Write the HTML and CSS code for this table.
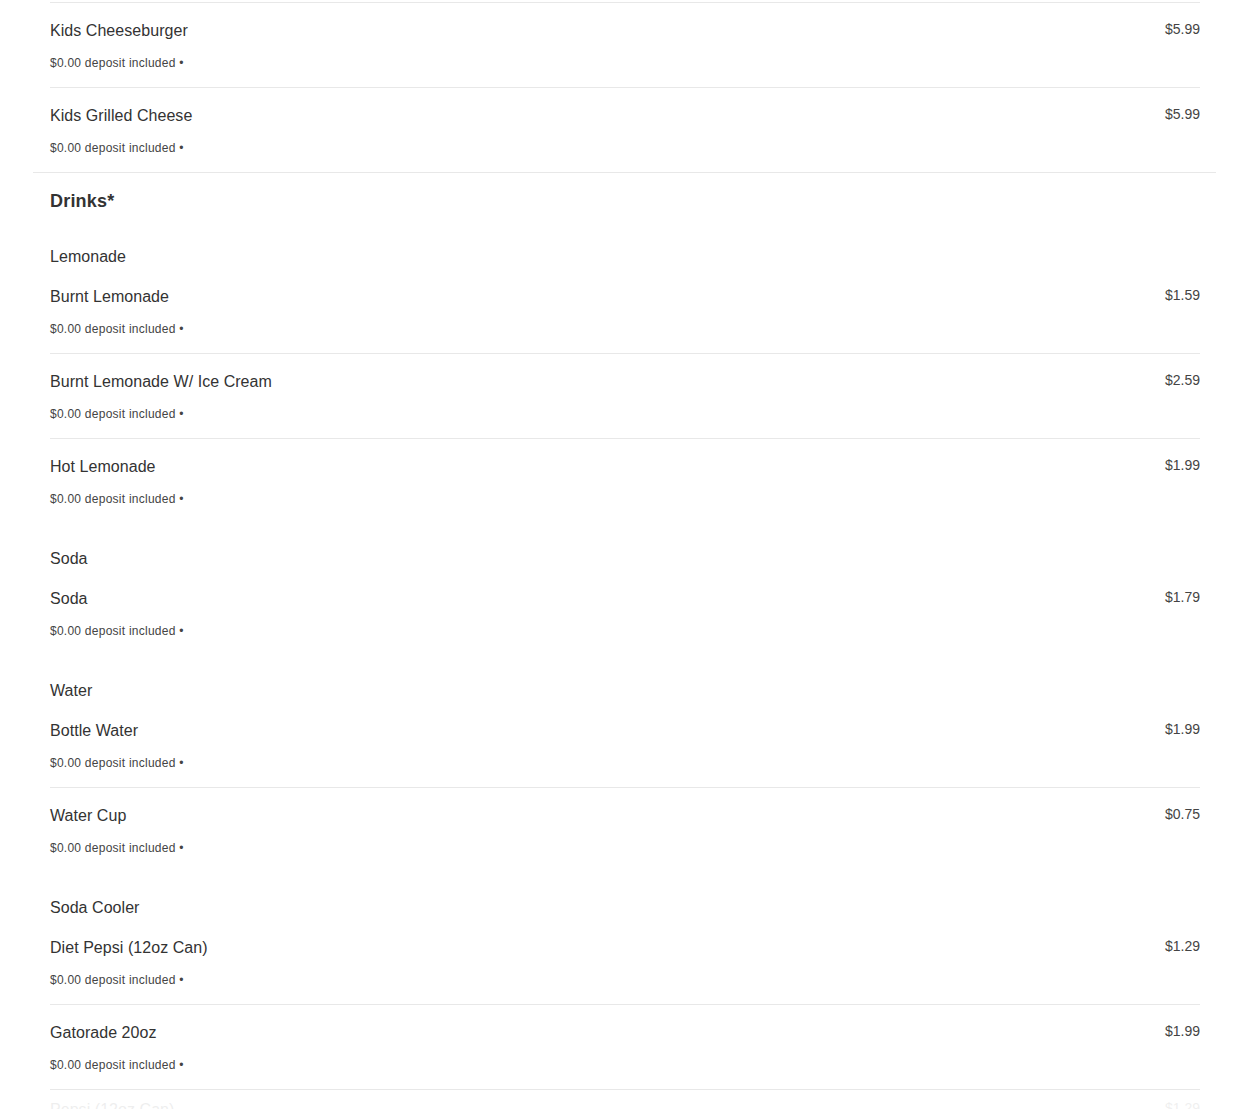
FILE: index.html
```html
<!DOCTYPE html>
<html lang="en">
<head>
    <meta charset="UTF-8">
    <meta name="viewport" content="width=device-width, initial-scale=1.0">
    <title>Menu</title>
    <link rel="stylesheet" href="styles.css">
</head>
<body>
    <div class="menu">
        <!-- Kids (tail end) -->
        <section class="category">
            <div class="group">
                <div class="item first">
                    <div class="item-info">
                        <div class="item-name">Kids Cheeseburger</div>
                        <div class="item-note">$0.00 deposit included •</div>
                    </div>
                    <div class="item-price">$5.99</div>
                </div>
                <div class="item">
                    <div class="item-info">
                        <div class="item-name">Kids Grilled Cheese</div>
                        <div class="item-note">$0.00 deposit included •</div>
                    </div>
                    <div class="item-price">$5.99</div>
                </div>
            </div>
        </section>

        <section class="category">
            <h2 class="category-title">Drinks*</h2>

            <div class="group">
                <div class="group-title">Lemonade</div>
                <div class="item">
                    <div class="item-info">
                        <div class="item-name">Burnt Lemonade</div>
                        <div class="item-note">$0.00 deposit included •</div>
                    </div>
                    <div class="item-price">$1.59</div>
                </div>
                <div class="item">
                    <div class="item-info">
                        <div class="item-name">Burnt Lemonade W/ Ice Cream</div>
                        <div class="item-note">$0.00 deposit included •</div>
                    </div>
                    <div class="item-price">$2.59</div>
                </div>
                <div class="item">
                    <div class="item-info">
                        <div class="item-name">Hot Lemonade</div>
                        <div class="item-note">$0.00 deposit included •</div>
                    </div>
                    <div class="item-price">$1.99</div>
                </div>
            </div>

            <div class="group">
                <div class="group-title">Soda</div>
                <div class="item">
                    <div class="item-info">
                        <div class="item-name">Soda</div>
                        <div class="item-note">$0.00 deposit included •</div>
                    </div>
                    <div class="item-price">$1.79</div>
                </div>
            </div>

            <div class="group">
                <div class="group-title">Water</div>
                <div class="item">
                    <div class="item-info">
                        <div class="item-name">Bottle Water</div>
                        <div class="item-note">$0.00 deposit included •</div>
                    </div>
                    <div class="item-price">$1.99</div>
                </div>
                <div class="item">
                    <div class="item-info">
                        <div class="item-name">Water Cup</div>
                        <div class="item-note">$0.00 deposit included •</div>
                    </div>
                    <div class="item-price">$0.75</div>
                </div>
            </div>

            <div class="group">
                <div class="group-title">Soda Cooler</div>
                <div class="item">
                    <div class="item-info">
                        <div class="item-name">Diet Pepsi (12oz Can)</div>
                        <div class="item-note">$0.00 deposit included •</div>
                    </div>
                    <div class="item-price">$1.29</div>
                </div>
                <div class="item">
                    <div class="item-info">
                        <div class="item-name">Gatorade 20oz</div>
                        <div class="item-note">$0.00 deposit included •</div>
                    </div>
                    <div class="item-price">$1.99</div>
                </div>
                <div class="item faded">
                    <div class="item-info">
                        <div class="item-name">Pepsi (12oz Can)</div>
                        <div class="item-note">$0.00 deposit included •</div>
                    </div>
                    <div class="item-price">$1.29</div>
                </div>
            </div>
        </section>
    </div>
</body>
</html>
```

FILE: styles.css
```css
body {
    font-family: "Liberation Sans", Arial, Helvetica, sans-serif;
    background-color: #fff;
    margin: 0;
    padding: 0;
    color: #333;
}

.menu {
    margin: 0 34px 0 33px;
    padding-top: 2px;
}

.category {
    padding: 0 16px 0 17px;
    border-bottom: 1px solid #e8e8e8;
}

.category-title {
    font-size: 18px;
    line-height: 22px;
    font-weight: 700;
    color: #333;
    margin: 0 0 9px;
    padding-top: 17px;
    letter-spacing: 0.2px;
}

.group + .group,
.category-title + .group {
    padding-top: 26px;
}

.group-title {
    font-size: 16px;
    line-height: 20px;
    color: #333;
    margin-bottom: 2px;
    letter-spacing: 0.05px;
}

.item {
    display: flex;
    justify-content: space-between;
    align-items: flex-start;
    padding: 18px 0 16px;
    border-bottom: 1px solid #e8e8e8;
}

.item.first {
    border-top: 1px solid #e8e8e8;
}

.group .item:last-child {
    border-bottom: none;
}

.item-name {
    font-size: 16px;
    line-height: 20px;
    color: #333;
    letter-spacing: 0.05px;
}

.item-note {
    font-size: 12px;
    line-height: 16px;
    color: #444;
    margin-top: 14px;
    letter-spacing: 0.25px;
}

.item-price {
    font-size: 14px;
    line-height: 18px;
    color: #444;
    margin-top: -1px;
}

.item.faded {
    opacity: 0.08;
    padding-top: 10px;
}
```
